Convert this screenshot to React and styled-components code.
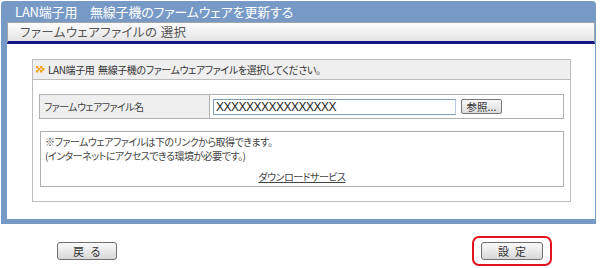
import React from "react";
import styled, { createGlobalStyle } from "styled-components";

const Global = createGlobalStyle`
  html, body { margin: 0; padding: 0; background: #fff; }
  body {
    font-family: "Noto Sans CJK JP", "Noto Sans", sans-serif;
    font-feature-settings: "palt";
    color: #333;
  }
`;

const Page = styled.div`
  width: 600px;
  height: 268px;
  padding: 1px 0 0 1px;
  box-sizing: border-box;
`;

const Frame = styled.section`
  width: 595px;
  background: #7799c6;
  border-radius: 4px 4px 0 0;
  padding: 0 1px 5px 6px;
  box-sizing: border-box;
`;

const Title = styled.h1`
  margin: 0;
  height: 21px;
  line-height: 21px;
  padding-left: 8px;
  font-size: 13px;
  font-weight: normal;
  color: #fff;
  letter-spacing: -0.2px;
`;

const Body = styled.div`
  background: #fff;
  padding-bottom: 17px;
`;

const SubTitle = styled.h2`
  margin: 0;
  height: 22px;
  line-height: 17px;
  box-sizing: border-box;
  padding-left: 12px;
  font-size: 12.5px;
  font-weight: normal;
  color: #555;
  background: linear-gradient(#fdfdfd, #e4e4e4);
  border: 1px solid #a5a5a5;
  border-bottom: 3px solid #141484;
  letter-spacing: 0.4px;
`;

const Box = styled.div`
  margin: 15px 24px 0 25px;
  border: 1px solid #bdbdbd;
  padding-bottom: 14px;
`;

const BoxHead = styled.div`
  display: flex;
  align-items: center;
  gap: 3px;
  height: 19px;
  padding-left: 3px;
  background: #efefef;
  border-bottom: 1px solid #bdbdbd;
  font-size: 10px;
  letter-spacing: -0.4px;
  color: #333;
`;

const Table = styled.div`
  margin: 14px 6px 0 6px;
  border: 1px solid #b0b0b0;
  display: grid;
  grid-template-columns: 170px 1fr;
  height: 25px;
  box-sizing: border-box;
`;

const LabelCell = styled.div`
  background: #efefef;
  border-right: 1px solid #b0b0b0;
  display: flex;
  align-items: center;
  padding-left: 4px;
  font-size: 10px;
  letter-spacing: -0.6px;
  color: #444;
`;

const ValueCell = styled.div`
  display: flex;
  align-items: center;
  padding-left: 3px;
  gap: 5px;
`;

const FileInput = styled.div`
  width: 243px;
  height: 16px;
  box-sizing: border-box;
  border: 1px solid #7f9db9;
  border-right-color: #b5c8dc;
  font-family: "Liberation Sans", sans-serif;
  font-size: 12px;
  line-height: 14px;
  padding-left: 2px;
  color: #222;
  letter-spacing: -0.5px;
`;

const SmallButton = styled.button`
  width: 41px;
  height: 15px;
  padding: 0;
  font-family: inherit;
  font-size: 10.5px;
  line-height: 12px;
  color: #333;
  background: linear-gradient(#f8f8f8, #dcdcdc);
  border: 1px solid #777;
  border-radius: 2px;
`;

const Note = styled.div`
  margin: 12px 6px 0 7px;
  border: 1px solid #b0b0b0;
  height: 56px;
  box-sizing: border-box;
  padding: 3px 4px 0 4px;
  font-size: 10px;
  letter-spacing: -0.5px;
  line-height: 14px;
  color: #444;
  display: flex;
  flex-direction: column;
`;

const LinkRow = styled.div`
  margin-top: 7px;
  text-align: center;
`;

const Link = styled.a`
  color: #444;
  text-decoration: underline;
  font-size: 10px;
`;

const Footer = styled.div`
  display: flex;
  justify-content: space-between;
  align-items: center;
  padding: 12px 0 0 56px;
  width: 551px;
  box-sizing: border-box;
`;

const Btn = styled.button`
  width: ${(p) => p.$w}px;
  height: 18px;
  padding: 0;
  font-family: inherit;
  font-size: 11px;
  letter-spacing: 6px;
  text-indent: 6px;
  color: #333;
  background: linear-gradient(#fafafa, #d8d8d8);
  border: 1px solid #6f6f6f;
  border-radius: 3px;
`;

const Highlight = styled.div`
  padding: 4px 7px;
  border: 2px solid #e3141b;
  border-radius: 7px;
  display: flex;
`;

const ARROW_DOTS = [
  [0, 0], [4, 0],
  [2, 2], [6, 2],
  [0, 4], [4, 4],
];

const Arrow = () => (
  <svg width="9" height="7" viewBox="0 0 9 7">
    {ARROW_DOTS.map(([x, y], i) => (
      <rect key={i} x={x} y={y} width="2.4" height="2.4" fill="#f3a21a" />
    ))}
  </svg>
);

export default function App() {
  return (
    <>
      <Global />
      <Page>
        <Frame>
          <Title>LAN端子用　無線子機のファームウェアを更新する</Title>
          <Body>
            <SubTitle>ファームウェアファイルの 選択</SubTitle>
            <Box>
              <BoxHead>
                <Arrow />
                <span>LAN端子用&nbsp; 無線子機のファームウェアファイルを選択してください。</span>
              </BoxHead>
              <Table>
                <LabelCell>ファームウェアファイル名</LabelCell>
                <ValueCell>
                  <FileInput>XXXXXXXXXXXXXXXX</FileInput>
                  <SmallButton>参照...</SmallButton>
                </ValueCell>
              </Table>
              <Note>
                <span>※ファームウェアファイルは下のリンクから取得できます。</span>
                <span>(インターネットにアクセスできる環境が必要です。)</span>
                <LinkRow>
                  <Link href="#">ダウンロードサービス</Link>
                </LinkRow>
              </Note>
            </Box>
          </Body>
        </Frame>
        <Footer>
          <Btn $w={60}>戻る</Btn>
          <Highlight>
            <Btn $w={62}>設定</Btn>
          </Highlight>
        </Footer>
      </Page>
    </>
  );
}
